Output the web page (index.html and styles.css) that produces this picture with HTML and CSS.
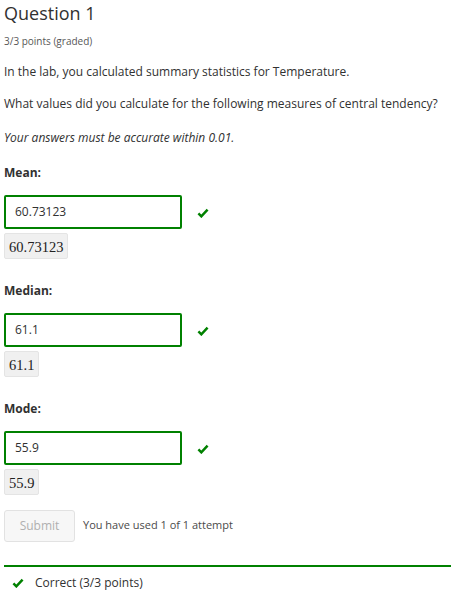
FILE: index.html
```html
<!DOCTYPE html>
<html>
<head>
<meta charset="utf-8">
<link rel="stylesheet" href="styles.css">
</head>
<body>
<div class="problem">
  <h3 class="title">Question 1</h3>
  <div class="progress">3/3 points (graded)</div>
  <p class="para">In the lab, you calculated summary statistics for Temperature.</p>
  <p class="para">What values did you calculate for the following measures of central tendency?</p>
  <p class="para note"><em>Your answers must be accurate within 0.01.</em></p>

  <div class="field">
    <div class="label">Mean:</div>
    <div class="row">
      <div class="input">60.73123</div>
      <svg class="check" viewBox="0 0 14 12"><path d="M1.5 6.5 L5 10 L12.5 2" fill="none" stroke="#008100" stroke-width="3"/></svg>
    </div>
    <div class="math">60.73123</div>
  </div>

  <div class="field">
    <div class="label">Median:</div>
    <div class="row">
      <div class="input">61.1</div>
      <svg class="check" viewBox="0 0 14 12"><path d="M1.5 6.5 L5 10 L12.5 2" fill="none" stroke="#008100" stroke-width="3"/></svg>
    </div>
    <div class="math">61.1</div>
  </div>

  <div class="field">
    <div class="label">Mode:</div>
    <div class="row">
      <div class="input">55.9</div>
      <svg class="check" viewBox="0 0 14 12"><path d="M1.5 6.5 L5 10 L12.5 2" fill="none" stroke="#008100" stroke-width="3"/></svg>
    </div>
    <div class="math">55.9</div>
  </div>

  <div class="actions">
    <div class="submit">Submit</div>
    <div class="attempts">You have used 1 of 1 attempt</div>
  </div>

  <div class="notification">
    <svg class="check small" viewBox="0 0 14 12"><path d="M1.5 6.5 L5 10 L12.5 2" fill="none" stroke="#008100" stroke-width="3"/></svg>
    <span>Correct (3/3 points)</span>
  </div>
</div>
</body>
</html>
```
FILE: styles.css
```css
html, body { margin: 0; padding: 0; background: #fff; }
body { font-family: "Open Sans", "Liberation Sans", sans-serif; color: #313131; }
.problem { padding: 0 0 0 4px; }
.title { margin: 0; padding-top: 1px; font-size: 18px; font-weight: 400; line-height: 24px; color: #313131; }
.progress { margin-top: 9px; font-size: 10px; line-height: 14px; color: #575757; }
.para { margin: 15px 0 0; font-size: 12px; line-height: 17px; color: #313131; }
.para + .para { margin-top: 15px; }
.para.note { margin-top: 17px; }
.para em { font-style: italic; }
.field { margin-top: 18px; }
.field + .field { margin-top: 23px; }
.label { font-size: 12px; font-weight: 700; line-height: 17px; color: #313131; }
.row { display: flex; align-items: center; margin-top: 14px; }
.input { box-sizing: border-box; width: 178px; height: 34px; border: 2px solid #008100; border-radius: 2px; padding: 0 9px; font-size: 12px; line-height: 30px; color: #313131; }
.check { width: 12px; height: 10px; margin-left: 15px; margin-top: 1px; }
.math { display: inline-block; margin-top: 4px; padding: 0 4px; height: 26px; line-height: 26px; background: #f0f0f0; border: 1px solid #e4e4e4; border-radius: 2px; box-sizing: border-box; font-family: "Liberation Serif", "DejaVu Serif", serif; font-size: 14.5px; color: #222; }
.actions { display: flex; align-items: center; margin-top: 15px; }
.submit { box-sizing: border-box; width: 71px; height: 32px; border: 1px solid #e2e2e2; border-radius: 3px; background: #f7f7f7; color: #b0b0b0; font-size: 12px; line-height: 30px; text-align: center; }
.attempts { margin-left: 8px; margin-top: -3px; font-size: 11px; color: #4a4a4a; }
.notification { margin-top: 23px; border-top: 2px solid #008100; padding: 7px 0 0 8px; display: flex; align-items: center; font-size: 12px; color: #313131; }
.check.small { margin-left: 0; margin-right: 11px; }
```
